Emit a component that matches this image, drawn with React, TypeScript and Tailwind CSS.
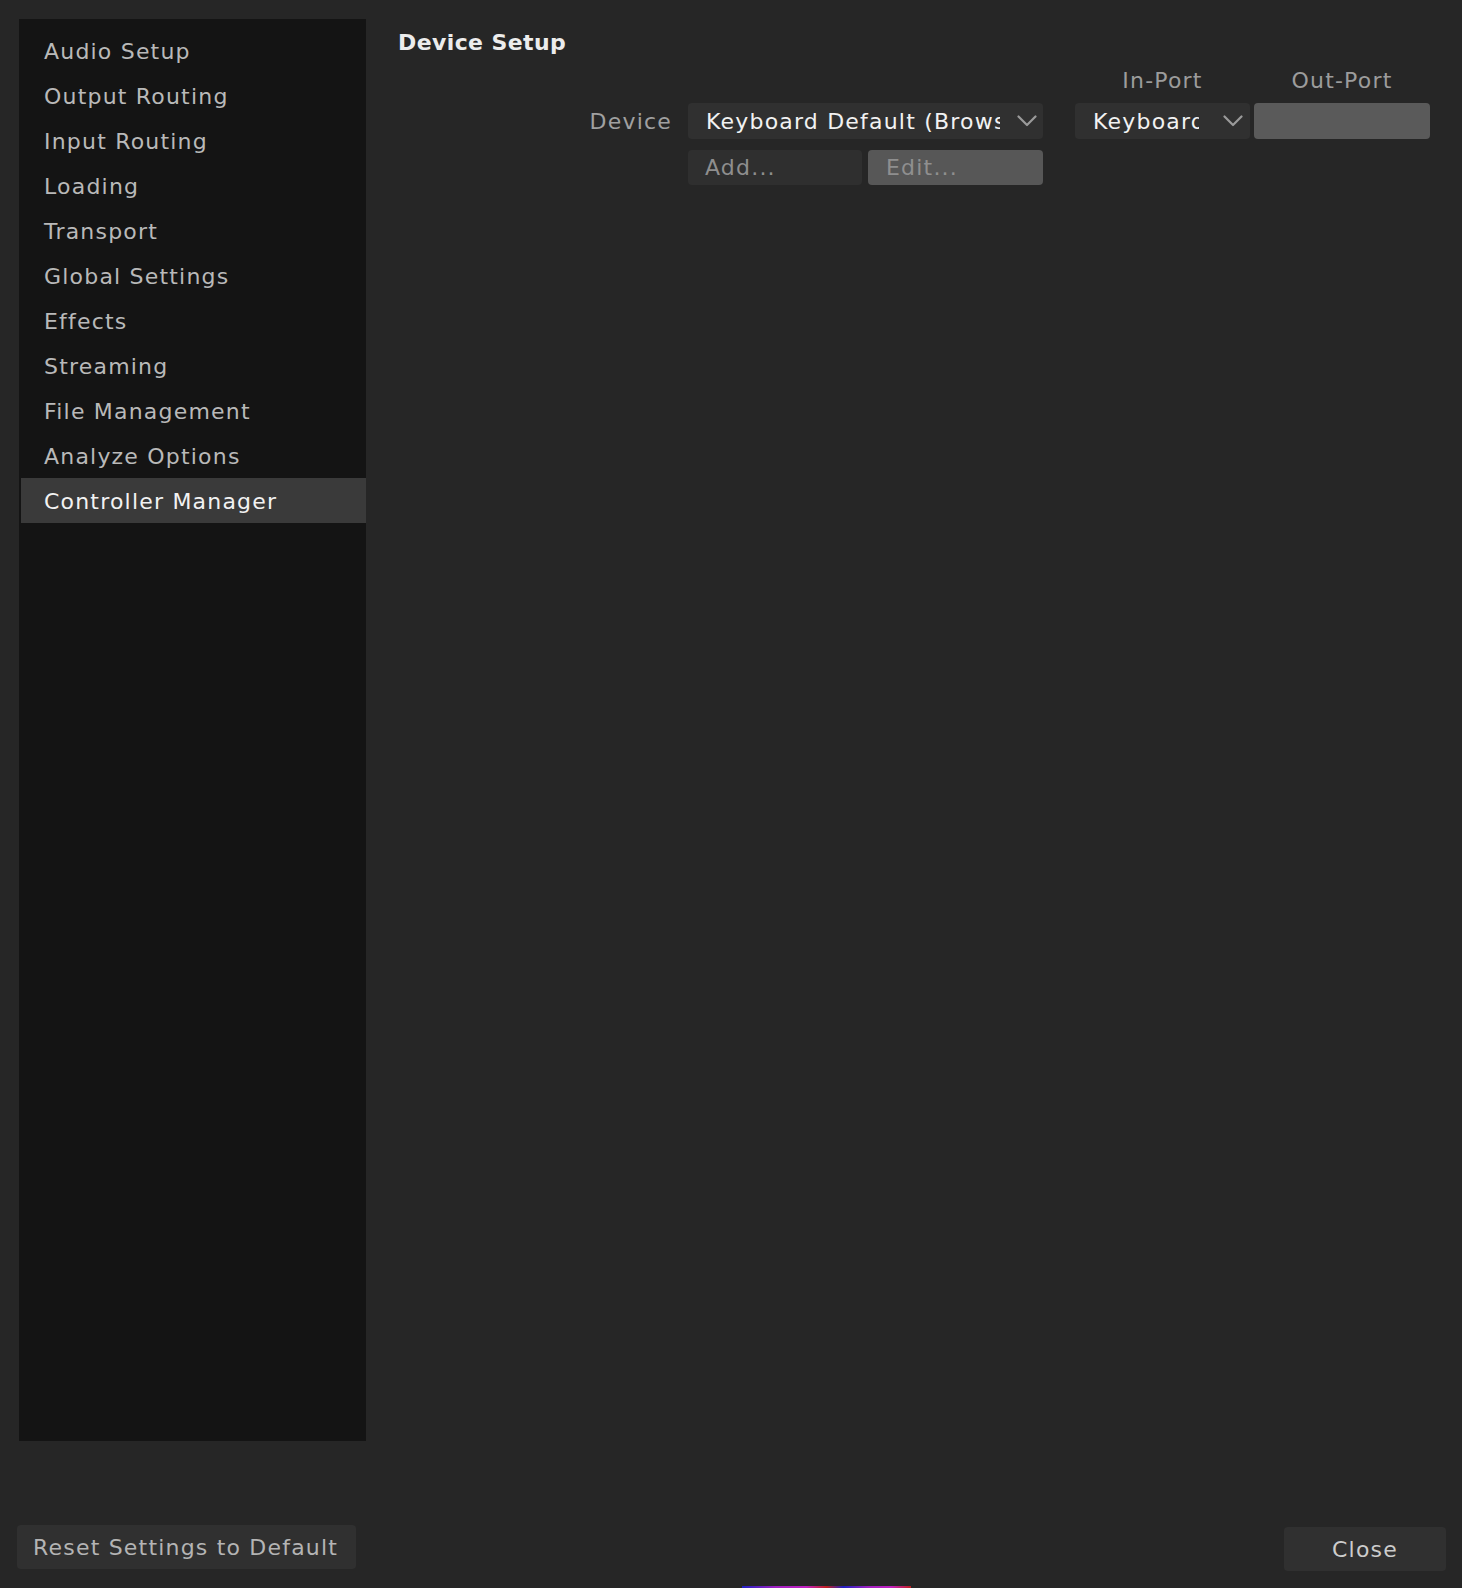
import React from "react";

const items = [
  "Audio Setup",
  "Output Routing",
  "Input Routing",
  "Loading",
  "Transport",
  "Global Settings",
  "Effects",
  "Streaming",
  "File Management",
  "Analyze Options",
  "Controller Manager",
];

function Chevron() {
  return (
    <svg width="20" height="12" viewBox="0 0 20 12" fill="none">
      <polyline points="1.5,1.5 10,10 18.5,1.5" stroke="#9a9a9a" strokeWidth="2.2" strokeLinecap="round" strokeLinejoin="round" />
    </svg>
  );
}

export default function App() {
  return (
    <div
      className="w-[1462px] h-[1588px] bg-[#262626] flex flex-col overflow-hidden text-[22px] tracking-[1.2px]"
      style={{ fontFamily: '"DejaVu Sans", "Liberation Sans", sans-serif' }}
    >
      <div className="flex pl-[19px] pt-[19px]">
        <div className="w-[347px] h-[1422px] bg-[#141414] pt-[9px] pl-[2px]">
          {items.map((it) => {
            const sel = it === "Controller Manager";
            return (
              <div
                key={it}
                className={
                  sel
                    ? "h-[45px] flex items-center pl-[23px] pt-[1px] bg-[#3a3a3a] text-[#f2f2f2]"
                    : "h-[45px] flex items-center pl-[23px] pt-[1px] text-[#b9b9b9]"
                }
              >
                {it}
              </div>
            );
          })}
        </div>
        <div className="flex-1 pl-[32px] pt-[10px]">
          <div className="h-[28px] leading-[28px] font-bold tracking-[0.4px] text-[#ececec]">Device Setup</div>
          <div className="mt-[12px] flex">
            <div className="w-[274px]" />
            <div className="w-[355px] ml-[16px]" />
            <div className="w-[175px] ml-[32px] h-[24px] leading-[24px] text-center text-[#9c9c9c]">In-Port</div>
            <div className="w-[176px] ml-[4px] h-[24px] leading-[24px] text-center text-[#9c9c9c]">Out-Port</div>
          </div>
          <div className="mt-[10px] flex items-center">
            <div className="w-[274px] text-right text-[#a0a0a0]">Device</div>
            <div className="w-[355px] ml-[16px] h-[36px] rounded-[4px] bg-[#303030] flex items-center pl-[18px]">
              <span className="w-[294px] overflow-hidden whitespace-nowrap text-[#f2f2f2]">Keyboard Default (Browser)</span>
              <span className="ml-[17px] flex items-center"><Chevron /></span>
            </div>
            <div className="w-[175px] ml-[32px] h-[36px] rounded-[4px] bg-[#303030] flex items-center pl-[18px]">
              <span className="w-[106px] overflow-hidden whitespace-nowrap text-[#f2f2f2]">Keyboard</span>
              <span className="ml-[24px] flex items-center"><Chevron /></span>
            </div>
            <div className="w-[176px] ml-[4px] h-[36px] rounded-[4px] bg-[#5a5a5a]" />
          </div>
          <div className="mt-[11px] flex">
            <div className="w-[274px]" />
            <div className="ml-[16px] w-[174px] h-[35px] rounded-[4px] bg-[#2f2f2f] flex items-center pl-[17px] text-[#8e8e8e]">Add...</div>
            <div className="ml-[6px] w-[175px] h-[35px] rounded-[4px] bg-[#575757] flex items-center pl-[18px] text-[#8f8f8f]">Edit...</div>
          </div>
        </div>
      </div>
      <div className="mt-[84px] flex justify-between items-start pl-[17px] pr-[16px]">
        <div className="w-[339px] h-[44px] rounded-[4px] bg-[#303030] flex items-center pl-[16px] text-[#b4b4b4]">
          Reset Settings to Default
        </div>
        <div className="mt-[2px] w-[162px] h-[44px] rounded-[4px] bg-[#303030] flex items-center justify-center text-[#cccccc]">
          Close
        </div>
      </div>
      <div className="mt-auto h-[2px] flex">
        <div className="w-[742px]" />
        <div className="w-[169px] h-[2px] bg-[linear-gradient(90deg,#2020c0_0%,#a020c0_20%,#c020c0_38%,#c02020_50%,#2020c0_60%,#a020c0_75%,#c020c0_88%,#c02020_100%)]" />
      </div>
    </div>
  );
}
